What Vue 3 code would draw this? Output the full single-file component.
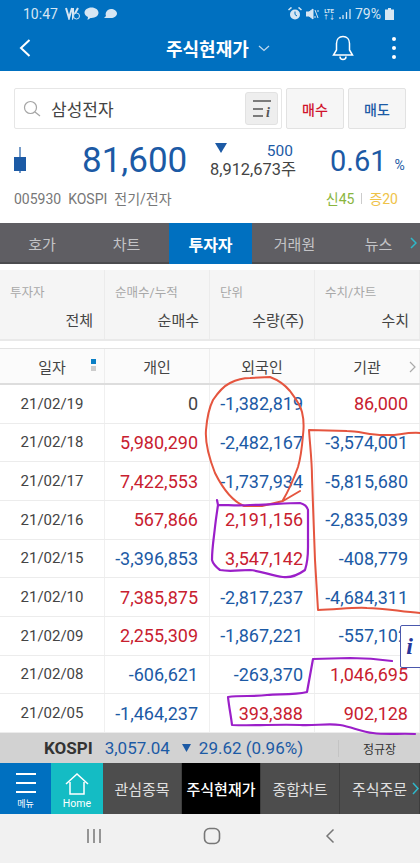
<script setup>
const tabs = ["호가", "차트", "투자자", "거래원", "뉴스"];

const filters = [
  { label: "투자자", value: "전체" },
  { label: "순매수/누적", value: "순매수" },
  { label: "단위", value: "수량(주)" },
  { label: "수치/차트", value: "수치" },
];

const rows = [
  ["21/02/19", "0", "-1,382,819", "86,000"],
  ["21/02/18", "5,980,290", "-2,482,167", "-3,574,001"],
  ["21/02/17", "7,422,553", "-1,737,934", "-5,815,680"],
  ["21/02/16", "567,866", "2,191,156", "-2,835,039"],
  ["21/02/15", "-3,396,853", "3,547,142", "-408,779"],
  ["21/02/10", "7,385,875", "-2,817,237", "-4,684,311"],
  ["21/02/09", "2,255,309", "-1,867,221", "-557,102"],
  ["21/02/08", "-606,621", "-263,370", "1,046,695"],
  ["21/02/05", "-1,464,237", "393,388", "902,128"],
];

const shortcuts = ["관심종목", "주식현재가", "종합차트", "주식주문"];

function tone(v) {
  if (v === "0") return "zero";
  return v.startsWith("-") ? "down" : "up";
}
</script>

<template>
  <div class="page">
    <div class="top">
      <div class="status">
        <div class="status-left">
          <span>10:47</span>
          <svg width="15" height="13" viewBox="0 0 15 13"><path d="M1 1l3 10 3-10M8 1v9l5-9" fill="none" stroke="#d6e6f3" stroke-width="2" /><circle cx="11.500" cy="9" r="3" fill="#0070c0" stroke="#d6e6f3" /></svg>
          <svg width="15" height="13" viewBox="0 0 15 13"><path d="M7.500 0.500c4 0 7 2.300 7 5.200s-3 5.200-7 5.200l-1 0-3 2 .5-3c-2-.9-3.500-2.400-3.500-4.200 0-2.900 3-5.200 7-5.200z" fill="#d6e6f3" /></svg>
          <svg width="14" height="12" viewBox="0 0 14 12"><path d="M8 1c3 0 6 1.800 6 4.500S11 10 8 10H1l2-2C1.800 5 4 1 8 1z" fill="#d6e6f3" /></svg>
        </div>
        <div class="status-right">
          <svg width="14" height="14" viewBox="0 0 14 14"><circle cx="7" cy="7.500" r="5" fill="#d6e6f3" /><path d="M7 4.500v3l2 1.500" stroke="#0070c0" fill="none" /><path d="M0.500 3l3-2.500M13.500 3l-3-2.500" stroke="#d6e6f3" stroke-width="1.600" /></svg>
          <svg width="13" height="12" viewBox="0 0 13 12"><path d="M0 4h3l4-3v10l-4-3H0zM9 2l3 8M12 2v2M9 8v2" fill="#d6e6f3" stroke="#d6e6f3" /></svg>
          <span class="lte">LTE<br />↑↓</span>
          <svg width="12" height="12" viewBox="0 0 12 12"><path d="M1 11V9M4 11V7M7.500 11V4M11 11V1" stroke="#d6e6f3" stroke-width="1.300" /></svg>
          <span>79%</span>
          <svg width="9" height="12" viewBox="0 0 9 12"><path d="M3 0h3v1.500h3V12H0V1.500h3z" fill="#d6e6f3" /></svg>
        </div>
      </div>
      <div class="title-bar">
        <svg class="back" width="14" height="20" viewBox="0 0 14 20"><path d="M11.500 2L3 10l8.500 8" fill="none" stroke="#fff" stroke-width="2" /></svg>
        <div class="title">
          주식현재가
          <svg width="12" height="7" viewBox="0 0 12 7"><path d="M1 1l5 4.500L11 1" fill="none" stroke="#bcd8ee" stroke-width="1.300" /></svg>
        </div>
        <svg class="bell" width="22" height="26" viewBox="0 0 22 26"><path d="M11 1.500c-4 0-6.500 3-6.500 7V15L1.500 20h19l-3-5V8.500c0-4-2.500-7-6.500-7zM8 21.500c0 4 6 4 6 0" fill="none" stroke="#fff" stroke-width="1.500" /></svg>
        <div class="dots"><i></i><i></i><i></i></div>
      </div>
    </div>

    <div class="quote">
      <div class="search-row">
        <div class="search">
          <svg width="18" height="18" viewBox="0 0 18 18"><circle cx="7.500" cy="7.500" r="6" fill="none" stroke="#a5a5a5" stroke-width="1.200" /><path d="M12 12l5 4" stroke="#a5a5a5" stroke-width="1.200" /></svg>
          <span class="search-text">삼성전자</span>
          <div class="list-btn">
            <svg width="20" height="20" viewBox="0 0 20 20"><path d="M1 2h18M1 10h10M1 17h10" stroke="#555" stroke-width="1.400" /></svg>
            <em>i</em>
          </div>
        </div>
        <button class="trade buy">매수</button>
        <button class="trade sell">매도</button>
      </div>

      <div class="price-row">
        <svg class="candle" width="12" height="26" viewBox="0 0 12 26"><path d="M6 0v26" stroke="#1c5aa5" stroke-width="1.200" /><rect y="10" width="12" height="14" fill="#1c5aa5" /></svg>
        <div class="price">81,600</div>
        <div class="change">
          <div class="change-top">
            <svg width="12" height="10" viewBox="0 0 12 10"><path d="M0 0h12L6 10z" fill="#1c5aa5" /></svg>
            <span>500</span>
          </div>
          <div class="volume">8,912,673주</div>
        </div>
        <div class="rate">0.61</div>
        <div class="pct">%</div>
      </div>

      <div class="info-row">
        <span>005930&nbsp; KOSPI&nbsp; 전기/전자</span>
        <span class="flags"><b class="green">신45</b><u></u><b class="yellow">증20</b></span>
      </div>
    </div>

    <div class="tabs">
      <div v-for="t in tabs" :key="t" class="tab" :class="{ on: t === '투자자' }">{{ t }}</div>
      <svg class="tab-more" width="7" height="12" viewBox="0 0 7 12"><path d="M1 1l5 5-5 5" fill="none" stroke="#2fb7c9" stroke-width="1.500" /></svg>
    </div>

    <div class="filters">
      <div v-for="f in filters" :key="f.label" class="filter">
        <div class="filter-label">{{ f.label }}</div>
        <div class="filter-value">{{ f.value }}</div>
      </div>
    </div>

    <div class="thead">
      <div class="th">
        일자
        <span class="sort"><i class="blue"></i><i></i></span>
      </div>
      <div class="th">개인</div>
      <div class="th">외국인</div>
      <div class="th">
        기관
        <svg class="th-more" width="7" height="12" viewBox="0 0 7 12"><path d="M1 1l5 5-5 5" fill="none" stroke="#aaa" stroke-width="1.200" /></svg>
      </div>
    </div>

    <div class="tbody">
      <div v-for="r in rows" :key="r[0]" class="tr">
        <div class="td date">{{ r[0] }}</div>
        <div v-for="(v, i) in r.slice(1)" :key="i" class="td" :class="tone(v)">{{ v }}</div>
      </div>

      <!-- hand drawn marks on the screenshot, coordinates are page pixels -->
      <svg class="marks" width="420" height="348" viewBox="0 385 420 348" fill="none" stroke-linecap="round" stroke-linejoin="round">
        <path d="M300 491L283 501 262 506H244C232 501 222 487 215 473 208 455 205 442 206 430 207 418 209 408 213 400 219 391 224 386 230 383 238 379 244 378 250 378L270 377C278 380 285 385 290 391 296 399 300 404 302 412 304 420 304 427 303 435 302 447 301 457 298 467 294 478 289 490 283 500" stroke="#e5553f" stroke-width="2" />
        <path d="M420 433C405 432 396 436 387 435 372 436 360 431 347 431L309 430C310 445 312 462 312 477 313 505 314 535 315 560L318 610C335 610 352 607 367 608 385 608 402 612 420 613" stroke="#e5553f" stroke-width="2" />
        <path d="M217 500L218 505C228 505 240 506 250 505 268 505 284 503 300 503 304 504 307 506 308 510L308 547C308 556 307 564 305 570 298 575 290 578 283 577 272 576 262 571 250 570 240 570 230 572 220 570 216 567 213 564 212 560 212 548 214 537 215 527 216 518 217 512 218 505" stroke="#9b1fc9" stroke-width="2.200" />
        <path d="M392 661C378 659 364 658 350 658L313 659C311 670 309 681 307 692 294 695 280 694 267 695 254 697 241 695 228 697 229 707 231 716 232 725 255 726 278 724 300 725 314 726 328 723 340 725 352 727 362 732 373 733 387 735 401 733 415 734" stroke="#9b1fc9" stroke-width="2.200" />
      </svg>

      <div class="info-tag">i</div>
    </div>

    <div class="index-bar">
      <b class="idx-name">KOSPI</b>
      <span class="idx-val">3,057.04</span>
      <svg width="9" height="8" viewBox="0 0 9 8"><path d="M0 0h9L4.500 8z" fill="#1c5aa5" /></svg>
      <span class="idx-val idx-chg">29.62 (0.96%)</span>
      <span class="session">정규장</span>
    </div>

    <div class="shortcuts">
      <div class="sc-menu">
        <div class="burger"><i></i><i></i><i></i></div>
        <span>메뉴</span>
      </div>
      <div class="sc-home">
        <svg width="24" height="22" viewBox="0 0 24 22"><path d="M1 11L12 1l11 10M5 9v12h14V9" fill="none" stroke="#fff" stroke-width="1.500" /></svg>
        <span>Home</span>
      </div>
      <div v-for="s in shortcuts" :key="s" class="sc-item" :class="{ on: s === '주식현재가' }">{{ s }}</div>
      <svg class="sc-more" width="7" height="13" viewBox="0 0 7 13"><path d="M1 1l5 5.500L1 12" fill="none" stroke="#2fb7c9" stroke-width="1.500" /></svg>
    </div>

    <div class="android">
      <div class="nav-cell"><svg width="16" height="16" viewBox="0 0 16 16"><path d="M2 1v14M8 1v14M14 1v14" stroke="#777" stroke-width="1.500" /></svg></div>
      <div class="nav-cell"><svg width="18" height="18" viewBox="0 0 18 18"><rect x="1.500" y="1.500" width="15" height="15" rx="5" fill="none" stroke="#777" stroke-width="1.600" /></svg></div>
      <div class="nav-cell"><svg width="10" height="16" viewBox="0 0 10 16"><path d="M8.500 1.500L2 8l6.500 6.500" fill="none" stroke="#777" stroke-width="1.500" /></svg></div>
    </div>
  </div>
</template>

<style scoped>
.page {
  width: 420px;
  height: 863px;
  overflow: hidden;
  display: flex;
  flex-direction: column;
  background: #fff;
  font-family: Roboto, "Noto Sans CJK KR", sans-serif;
  color: #333;
}

.top {
  height: 71px;
  background: #0070c0;
  flex: none;
}
.status {
  height: 27px;
  padding: 0 26px 0 23px;
  display: flex;
  align-items: center;
  justify-content: space-between;
  color: #d6e6f3;
  font-size: 14px;
}
.status-left,
.status-right {
  display: flex;
  align-items: center;
  gap: 4px;
}
.status-left span {
  margin-right: 3px;
}
.lte {
  font-size: 6px;
  line-height: 6px;
  font-weight: 700;
  text-align: center;
}
.title-bar {
  height: 44px;
  display: flex;
  align-items: center;
  padding: 0 0 2px 18px;
  box-sizing: border-box;
}
.back {
  margin-right: 134px;
}
.title {
  width: 130px;
  display: flex;
  align-items: center;
  gap: 9px;
  white-space: nowrap;
  color: #fff;
  font-size: 18px;
  font-weight: 700;
}
.bell {
  margin-left: 36px;
}
.dots {
  margin-left: 38px;
  display: flex;
  flex-direction: column;
  gap: 5px;
}
.dots i {
  width: 4px;
  height: 4px;
  border-radius: 50%;
  background: #fff;
}

.quote {
  height: 152px;
  flex: none;
  padding: 17px 14px 0;
  box-sizing: border-box;
}
.search-row {
  display: flex;
  gap: 4px;
  height: 41px;
}
.search {
  width: 268px;
  box-sizing: border-box;
  border: 1px solid #e6e6e6;
  border-radius: 2px;
  display: flex;
  align-items: center;
  padding: 0 3px 0 8px;
}
.search-text {
  margin-left: 10px;
  font-size: 17px;
  color: #444;
}
.list-btn {
  margin-left: auto;
  width: 33px;
  height: 33px;
  background: #eee;
  border: 1px solid #e2e2e2;
  border-radius: 3px;
  box-sizing: border-box;
  position: relative;
  display: flex;
  align-items: center;
  padding-left: 6px;
}
.list-btn em {
  position: absolute;
  right: 7px;
  bottom: 3px;
  font: italic 700 14px "Liberation Serif", serif;
  color: #555;
}
.trade {
  width: 58px;
  padding: 0;
  background: #f6f6f6;
  border: 1px solid #e2e2e2;
  border-radius: 2px;
  font: 500 14px Roboto, "Noto Sans CJK KR", sans-serif;
}
.buy {
  color: #d0142c;
}
.sell {
  color: #1c5aa5;
}

.price-row {
  height: 47px;
  margin-top: 8px;
  display: flex;
  align-items: center;
}
.candle {
  margin-top: -2px;
  flex: none;
}
.price {
  width: 105px;
  margin-left: 56px;
  font-size: 35px;
  color: #1c5aa5;
  white-space: nowrap;
}
.change {
  width: 88px;
  margin-left: 23px;
  margin-top: -2px;
}
.change-top {
  display: flex;
  align-items: center;
  justify-content: space-between;
  height: 20px;
  padding-right: 5px;
  padding-left: 5px;
  color: #1c5aa5;
  font-size: 15.500px;
}
.change-top svg {
  margin-top: -5px;
}
.volume {
  font-size: 16.400px;
  line-height: 18px;
  color: #444;
  white-space: nowrap;
}
.rate {
  margin-left: 32px;
  font-size: 29px;
  color: #1c5aa5;
}
.pct {
  margin-left: 8px;
  margin-top: 9px;
  font-size: 14px;
  color: #1c5aa5;
}

.info-row {
  margin-top: 4px;
  padding-right: 8px;
  height: 20px;
  display: flex;
  align-items: center;
  justify-content: space-between;
  color: #777;
  font-size: 14px;
}
.flags {
  display: flex;
  align-items: center;
  gap: 7px;
}
.flags b {
  font-weight: 400;
}
.flags u {
  width: 1px;
  height: 11px;
  background: #ccc;
}
.green {
  color: #8ab53e;
}
.yellow {
  color: #efc348;
}

.tabs {
  height: 41px;
  flex: none;
  background: #5f5e63;
  border-bottom: 2px solid #4c4c4f;
  box-sizing: border-box;
  display: grid;
  grid-template-columns: 84px 85px 83px 85px 83px;
  position: relative;
}
.tab {
  display: flex;
  align-items: center;
  justify-content: center;
  color: #c4c4c7;
  font-size: 15px;
}
.tab.on {
  background: #0070c0;
  color: #fff;
  font-weight: 700;
  font-size: 16px;
  height: 41px;
}
.tab-more {
  position: absolute;
  right: 3px;
  top: 14px;
}

.filters {
  height: 71px;
  flex: none;
  margin-top: 6px;
  background: #f5f5f5;
  display: grid;
  grid-template-columns: 105px 105px 105px 105px;
  border-bottom: 2px solid #e9e9e9;
  box-sizing: border-box;
}
.filter {
  border-right: 1px solid #ebebeb;
  padding: 14px 10px 0 10px;
}
.filter-label {
  font-size: 12.500px;
  line-height: 18px;
  color: #a8a8a8;
}
.filter-value {
  margin-top: 9px;
  text-align: right;
  font-size: 15px;
  line-height: 20px;
  color: #444;
}
.filter:first-child .filter-value {
  padding-right: 1px;
}

.thead {
  height: 37px;
  flex: none;
  margin-top: 7px;
  background: #fbfbfb;
  border-top: 1px solid #e3e3e3;
  border-bottom: 2px solid #ddd;
  box-sizing: border-box;
  display: grid;
  grid-template-columns: 105px 105px 105px 105px;
}
.th {
  display: flex;
  align-items: center;
  justify-content: center;
  position: relative;
  border-right: 1px solid #eee;
  font-size: 15px;
  color: #444;
}
.sort {
  position: absolute;
  right: 8px;
  top: 10px;
  display: flex;
  flex-direction: column;
  gap: 2px;
}
.sort i {
  width: 5px;
  height: 5px;
  background: #ccc;
}
.sort i.blue {
  background: #0a7fc5;
}
.th-more {
  position: absolute;
  right: 3px;
  top: 12px;
}

.tbody {
  position: relative;
  height: 348px;
  flex: none;
  display: grid;
  grid-template-rows: repeat(9, 1fr);
}
.tr {
  display: grid;
  grid-template-columns: 105px 105px 105px 105px;
  border-bottom: 1px solid #ececec;
}
.td {
  display: flex;
  align-items: center;
  justify-content: flex-end;
  padding-right: 11px;
  border-right: 1px solid #f0f0f0;
  font-size: 18px;
  white-space: nowrap;
}
.td.date {
  justify-content: center;
  padding-right: 0;
  font-size: 15px;
  color: #444;
}
.zero {
  color: #444;
}
.down {
  color: #1c5aa5;
}
.up {
  color: #c8202f;
}
.marks {
  position: absolute;
  left: 0;
  top: 0;
  overflow: visible;
  pointer-events: none;
}
.info-tag {
  position: absolute;
  right: -4px;
  top: 240px;
  width: 24px;
  height: 43px;
  box-sizing: border-box;
  background: #fff;
  border: 1px solid #4a58ad;
  border-radius: 2px;
  display: flex;
  align-items: center;
  justify-content: center;
  font: italic 700 24px "Liberation Serif", serif;
  color: #27369a;
  padding-right: 5px;
}

.index-bar {
  height: 30px;
  flex: none;
  box-sizing: border-box;
  background: #d2d2d2;
  display: flex;
  align-items: center;
  padding-left: 44px;
  font-size: 17px;
}
.idx-name {
  color: #333;
  margin-right: 12px;
  font-weight: 700;
}
.idx-val {
  color: #1c5aa5;
  margin-right: 12px;
}
.idx-chg {
  margin-left: 8px;
  margin-right: 0;
}
.session {
  margin-left: auto;
  width: 82px;
  font-size: 12px;
  text-align: center;
  color: #333;
  border-left: 1px solid #c4c4c4;
  box-sizing: border-box;
}

.shortcuts {
  height: 51px;
  flex: none;
  display: grid;
  grid-template-columns: 51px 52px 79px 79px 79px 80px;
  background: #4d4d4d;
  position: relative;
}
.sc-menu,
.sc-home {
  display: flex;
  flex-direction: column;
  align-items: center;
  justify-content: flex-end;
  padding-bottom: 4px;
  color: #fff;
  font-size: 9px;
}
.sc-menu {
  background: #0070c0;
}
.sc-home {
  background: #14bcc4;
  font-size: 10.500px;
  gap: 2px;
}
.burger {
  display: flex;
  flex-direction: column;
  gap: 7px;
  margin-bottom: 4px;
}
.burger i {
  display: block;
  width: 20px;
  height: 2px;
  background: #fff;
}
.sc-item {
  display: flex;
  align-items: center;
  justify-content: center;
  color: #e0e0e0;
  font-size: 15px;
  border-right: 1px solid #3e3e3e;
  white-space: nowrap;
}
.sc-item.on {
  background: #000;
  color: #fff;
  font-weight: 500;
}
.sc-more {
  position: absolute;
  right: 1px;
  top: 19px;
}

.android {
  flex: 1;
  background: #f1f1f1;
  display: flex;
  align-items: center;
  padding: 0 0 5px 35px;
}
.nav-cell {
  width: 118px;
  display: flex;
  justify-content: center;
}
</style>

<style>
html,
body {
  margin: 0;
  background: #fff;
}
</style>
